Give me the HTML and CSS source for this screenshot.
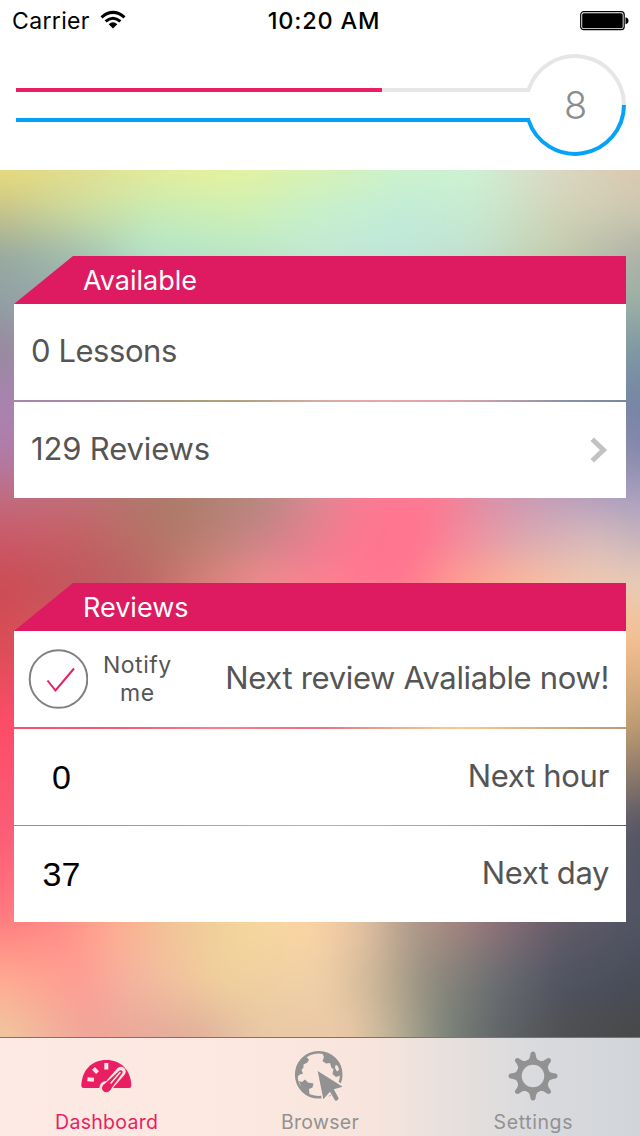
FILE: index.html
```
<!DOCTYPE html>
<html lang="en">
<head>
<meta charset="utf-8">
<title>Dashboard</title>
<link rel="stylesheet" href="styles.css">
</head>
<body>
<div class="screen">
  <header class="top">
    <div class="status">
      <div class="carrier"><span>Carrier</span>
        <svg class="wifi" width="26" height="20" viewBox="0 0 26 20"><g fill="none" stroke="#000" stroke-width="3"><path d="M1.5 7.3Q13-2.5 24.5 7.3"/><path d="M5.6 11.4Q13 5 20.4 11.4"/></g><path d="M8.7 14.2Q13 10.4 17.3 14.2L13 18.5Z"/></svg>
      </div>
      <div class="clock">10:20 AM</div>
      <svg class="battery" width="50" height="20" viewBox="0 0 50 20"><rect x="1.700" y=".7" width="43.500" height="18" rx="3" fill="#fff" stroke="#000" stroke-width="1.2"/><rect x="3.200" y="2.200" width="40.500" height="15" rx="1.5"/><path d="M46.500 6.2Q49.500 7 49.500 9.7T46.500 13.2Z"/></svg>
    </div>
    <div class="progress">
      <svg width="640" height="128" viewBox="0 42 640 128" fill="none" stroke-width="4">
        <path stroke="#e6e6e6" d="M382 90H528.400A49 49 0 0 1 624 105"/>
        <path stroke="#e91e63" d="M16 90H382"/>
        <path class="blue" d="M16 120H528.400A49 49 0 0 0 624 105"/>
      </svg>
      <span class="level">8</span>
    </div>
  </header>

  <main class="content">
    <svg class="backdrop" width="640" height="966" viewBox="0 170 640 966"></svg>
    <section class="card">
      <h2 class="title">Available</h2>
      <div class="row"><span class="lessons">0 Lessons</span></div>
      <div class="row"><span class="reviews">129 Reviews</span>
        <svg class="chevron" width="18" height="26" viewBox="0 0 18 26"><path d="M2.200 2.200L13.500 13L2.200 23.800" fill="none" stroke="#c2c2c2" stroke-width="5"/></svg>
      </div>
    </section>
    <section class="card">
      <h2 class="title">Reviews</h2>
      <div class="row">
        <div class="notify">
          <svg width="60" height="60" viewBox="0 0 60 60" fill="none"><circle cx="30.500" cy="30" r="28.800" stroke="#808080" stroke-width="2"/><path d="M19.500 31.500L27.500 41.500L46 19.500" stroke="#e91e63" stroke-width="2"/></svg>
          <span>Notify<br>me</span>
        </div>
        <span class="next">Next review Avaliable now!</span>
      </div>
      <div class="row"><b class="count">0</b><span class="hour">Next hour</span></div>
      <div class="row"><b class="count">37</b><span class="day">Next day</span></div>
    </section>
  </main>

  <nav class="tabs">
    <div class="tab active">
      <svg width="54" height="54" viewBox="0 0 54 54"><path fill="currentColor" d="M3.500 39Q1.300 39 1.300 36.500C1.800 21 12 11 26.300 11S51 21 51.300 36.500Q51.300 39 49 39Z"/><g fill="#fce8e0"><rect x="24.300" y="14" width="4" height="6.500"/><rect x="13.500" y="18.500" width="4" height="6" transform="rotate(-43 15.500 21.500)"/><rect x="7.500" y="28.500" width="6.500" height="4" transform="rotate(5 11 30)"/></g><path d="M26.500 39L41 22.500" stroke="#fce8e0" stroke-width="9.500" stroke-linecap="round"/><circle cx="26.300" cy="39" r="7" fill="#fce8e0"/><path fill="currentColor" d="M23.500 36L39.500 21.500Q43 20.500 42.500 24L29.500 42Z"/><path d="M31 34L40 23.500" stroke="#fce8e0" stroke-width="1.500" stroke-linecap="round"/><circle cx="26.300" cy="39" r="4.300" fill="currentColor"/></svg>
      <span>Dashboard</span>
    </div>
    <div class="tab browser">
      <svg width="54" height="54" viewBox="0 0 54 54"><circle cx="25.700" cy="25.800" r="22.500" fill="none" stroke="currentColor" stroke-width="2.600"/><path fill="currentColor" d="M3 30Q1 11 16 4.500L13.500 8L16 10.500L14.500 13.500L10.500 15.500L10.500 18.500L8.500 21L10 24.500L6 26ZM6 32L9 33L12 30.500L15 33.500L20.500 34.500L19.500 38.500L16 40L16.500 46L9.500 42ZM29 3.500L31 8L29.500 12L33 14.500L37 14L38.500 19L40.500 20L39.500 25L43 28L48.500 26Q50 12 37 5.500ZM42.500 16Q45.500 16 46 21L44 22.500L42 19Z" fill-rule="evenodd"/><path d="M23 18.500L53 37.500L43.500 41.500L48 49.500Q47.500 54.500 42 53L37.500 45.500L29.500 54Z" fill="#fae7df"/><path d="M24.700 22L49.700 37.700L40.800 40.300L45.600 49Q45.500 52.300 42 51.500L37 42.800L30.300 50.300Z" fill="currentColor"/></svg>
      <span>Browser</span>
    </div>
    <div class="tab settings">
      <svg width="54" height="54" viewBox="0 0 54 54"><defs><path id="tooth" d="M18.500 12.500Q23.500 12 24.300 6Q24.500 2.500 27 2.500T29.700 6Q30.500 12 35.500 12.500Z"/></defs><circle cx="27" cy="27" r="14" fill="none" stroke="currentColor" stroke-width="5.500"/><g fill="currentColor"><use href="#tooth"/><use href="#tooth" transform="rotate(45 27 27)"/><use href="#tooth" transform="rotate(90 27 27)"/><use href="#tooth" transform="rotate(135 27 27)"/><use href="#tooth" transform="rotate(180 27 27)"/><use href="#tooth" transform="rotate(225 27 27)"/><use href="#tooth" transform="rotate(270 27 27)"/><use href="#tooth" transform="rotate(315 27 27)"/></g></svg>
      <span>Settings</span>
    </div>
  </nav>
</div>
<script src="backdrop.js"></script>
</body>
</html>
```
FILE: styles.css
```
* { box-sizing: border-box; }
body { margin: 0; background: #fff; font-family: Inter, "Liberation Sans", sans-serif; color: #555; }
.screen { width: 640px; height: 1136px; display: flex; flex-direction: column; overflow: hidden; position: relative; }
.top { height: 170px; flex: none; background: #fff; }
.status { height: 42px; display: grid; grid-template-columns: 1fr auto 1fr; align-items: center; padding: 0 11px 0 12px; color: #000; font-size: 23px; line-height: 40px; }
.carrier { display: flex; align-items: center; gap: 10px; letter-spacing: .35px; }
.wifi { margin-top: -2px; }
.clock { font-weight: 500; font-size: 23.500px; letter-spacing: .8px; padding-left: 7px; }
.battery { justify-self: end; }
.progress { height: 128px; position: relative; }
.progress svg { display: block; }
.level { position: absolute; left: 525px; top: 40px; width: 101px; text-align: center; font-size: 38px; font-weight: 300; line-height: 46px; color: #8c8c8c; }
.blue { stroke: #05a3f8; }
.content { height: 867px; flex: none; padding: 86px 14px 0; display: flex; flex-direction: column; gap: 85px; position: relative; }
.backdrop { position: absolute; left: 0; top: 0; z-index: -1; }
.card { display: flex; flex-direction: column; gap: 1.5px; }
.title { margin: 0 0 -1.5px; height: 48px; padding-left: 69px; background: #de1b60; clip-path: polygon(59px 0, 100% 0, 100% 100%, 0 100%); color: #fff; font-weight: 400; font-size: 27px; line-height: 49px; }
.row { height: 96.200px; padding: 0 17px; background: #fff; display: flex; align-items: center; justify-content: space-between; font-size: 31px; line-height: 40px; }
.row > span { margin-top: -2px; }
.lessons { letter-spacing: -.45px; }
.reviews { letter-spacing: -.15px; }
.next { letter-spacing: -.34px; }
.hour { letter-spacing: -.3px; }
.day { letter-spacing: -.4px; }
.chevron { margin-right: 1px; }
.notify { display: flex; align-items: center; gap: 15px; margin-left: -3px; font-size: 23px; line-height: 28px; text-align: center; letter-spacing: .5px; }
.count { width: 61px; color: #000; font: 34px/40px "Liberation Sans", sans-serif; text-align: center; }
.tabs { height: 99px; flex: none; border-top: 1px solid #84706c; background: linear-gradient(90deg, #fceae5 0, #fce8e0 35%, #f7e5dd 58%, #e5dfdd 72%, #d9dadd 84%, #d1d5da 100%); display: grid; grid-template-columns: repeat(3, 1fr); color: #929292; }
.tab { display: flex; flex-direction: column; align-items: center; padding-top: 11px; font-size: 19.500px; line-height: 24px; letter-spacing: .3px; }
.tab span { margin-top: 7px; }
.settings { letter-spacing: .6px; }
.active { color: #e91e63; }
```
FILE: backdrop.js
```
// Each band is [y, [x, colour], ...]; bands cross-fade vertically into the next.
const bands = [
  [170, [0,'#e8dc7c'],[80,'#e2de90'],[160,'#e3ed9c'],[220,'#e6f29c'],[320,'#d8f2b4'],[400,'#ccf2cc'],[470,'#cef2d4'],[540,'#dadcc8'],[640,'#dcc8b0']],
  [210, [0,'#c8c488'],[80,'#cddda0'],[160,'#c8ecb4'],[240,'#d0f0b4'],[320,'#c6f0cc'],[400,'#c2ecd8'],[480,'#c8ead0'],[560,'#d2d4b8'],[640,'#cdc8b0']],
  [255, [0,'#98a8a0'],[80,'#a2c0b0'],[150,'#b4e4cc'],[240,'#b8e8c8'],[320,'#c4e8d4'],[400,'#bee8dc'],[480,'#c4e0cc'],[560,'#c4ccac'],[640,'#aeb0a8']],
  [300, [0,'#90a0a4'],[320,'#c0d0c4'],[640,'#9cb0a4']],
  [350, [0,'#9888a0'],[320,'#ccb8ac'],[640,'#7c98a4']],
  [401, [0,'#a884b0'],[80,'#a888a8'],[200,'#aaa070'],[260,'#b8a080'],[320,'#dcaca4'],[400,'#eca8ac'],[480,'#d8a0a8'],[560,'#8890a8'],[640,'#7484a4']],
  [450, [0,'#b07cac'],[200,'#aa8c74'],[320,'#d8a0a0'],[400,'#f090a0'],[520,'#b09cb0'],[640,'#8488ac']],
  [498, [0,'#c06c80'],[60,'#c46c78'],[170,'#ac7a66'],[260,'#b48880'],[320,'#dc8890'],[370,'#fc7890'],[430,'#ff7890'],[490,'#dc90a8'],[560,'#c0a0bc'],[640,'#a8a0c0']],
  [540, [0,'#cc5868'],[80,'#c46064'],[170,'#b47868'],[240,'#c48480'],[300,'#e08090'],[350,'#fc7890'],[420,'#ff7490'],[470,'#f090a0'],[520,'#dca8b0'],[600,'#d8bcbc'],[640,'#c8b4bc']],
  [582, [0,'#cc4c54'],[80,'#c05860'],[140,'#bc6464'],[200,'#d48078'],[260,'#f08c90'],[340,'#ff7c90'],[400,'#ff7490'],[450,'#ff9890'],[520,'#fcb89c'],[580,'#f0c8b0'],[640,'#e8ccb8']],
  [640, [0,'#d84c54'],[160,'#d87070'],[320,'#ff8088'],[520,'#fcb89c'],[640,'#f4c090']],
  [728, [0,'#ff4c68'],[120,'#fe5570'],[220,'#ff8088'],[320,'#ed6980'],[400,'#f0b090'],[460,'#ffd08c'],[540,'#ddb080'],[640,'#b99870']],
  [825, [0,'#ff5874'],[120,'#b09080'],[320,'#b8b0ac'],[480,'#aaa088'],[580,'#706c70'],[640,'#545464']],
  [880, [0,'#ff6878'],[100,'#ff9488'],[180,'#f0c098'],[250,'#f4d49c'],[310,'#fcd4a4'],[400,'#b8a090'],[500,'#907078'],[640,'#505464']],
  [922, [0,'#ff7c80'],[60,'#ff8c88'],[110,'#ffac90'],[180,'#f0c898'],[250,'#f4d89c'],[310,'#fcd4a4'],[360,'#e8c4a4'],[410,'#b09c8c'],[450,'#a88880'],[500,'#8c7078'],[560,'#645c68'],[640,'#505464']],
  [980, [0,'#ffac90'],[80,'#ff9c94'],[130,'#f4b4a0'],[220,'#f0d09c'],[320,'#f0d0a8'],[370,'#d0b898'],[430,'#908c80'],[500,'#686c70'],[560,'#505464'],[640,'#484c58']],
  [1036,[0,'#f0c8a0'],[90,'#f0a498'],[200,'#e0b09c'],[260,'#e8c8a4'],[350,'#ecc8a8'],[390,'#c0b498'],[450,'#788078'],[500,'#606468'],[560,'#505050'],[640,'#484848']]
];
const pad = 60;
const box = `x="${-pad}" width="${640 + 2 * pad}"`;
let defs = `<filter id="soft" filterUnits="userSpaceOnUse" ${box} y="110" height="1086" color-interpolation-filters="sRGB"><feGaussianBlur stdDeviation="13"/></filter>`;
let rects = '';
bands.forEach(([y, ...stops], i) => {
  const from = i ? bands[i - 1][0] : y - pad;
  const colours = stops.map(([x, c]) => `<stop offset="${x / 640}" stop-color="${c}"/>`).join('');
  defs += `<linearGradient id="c${i}" gradientUnits="userSpaceOnUse" x1="0" x2="640">${colours}</linearGradient>`;
  defs += `<linearGradient id="f${i}" gradientUnits="userSpaceOnUse" x1="0" x2="0" y1="${from}" y2="${y}"><stop offset="0" stop-color="${i ? '#000' : '#fff'}"/><stop offset="1" stop-color="#fff"/></linearGradient>`;
  defs += `<mask id="m${i}" maskUnits="userSpaceOnUse" ${box} y="110" height="1086"><rect ${box} y="${from}" height="1200" fill="url(#f${i})"/></mask>`;
  rects += `<rect ${box} y="${from}" height="${1196 - from}" fill="url(#c${i})" mask="url(#m${i})"/>`;
});
document.querySelector('.backdrop').innerHTML = `<defs>${defs}</defs><g filter="url(#soft)">${rects}</g>`;
```
